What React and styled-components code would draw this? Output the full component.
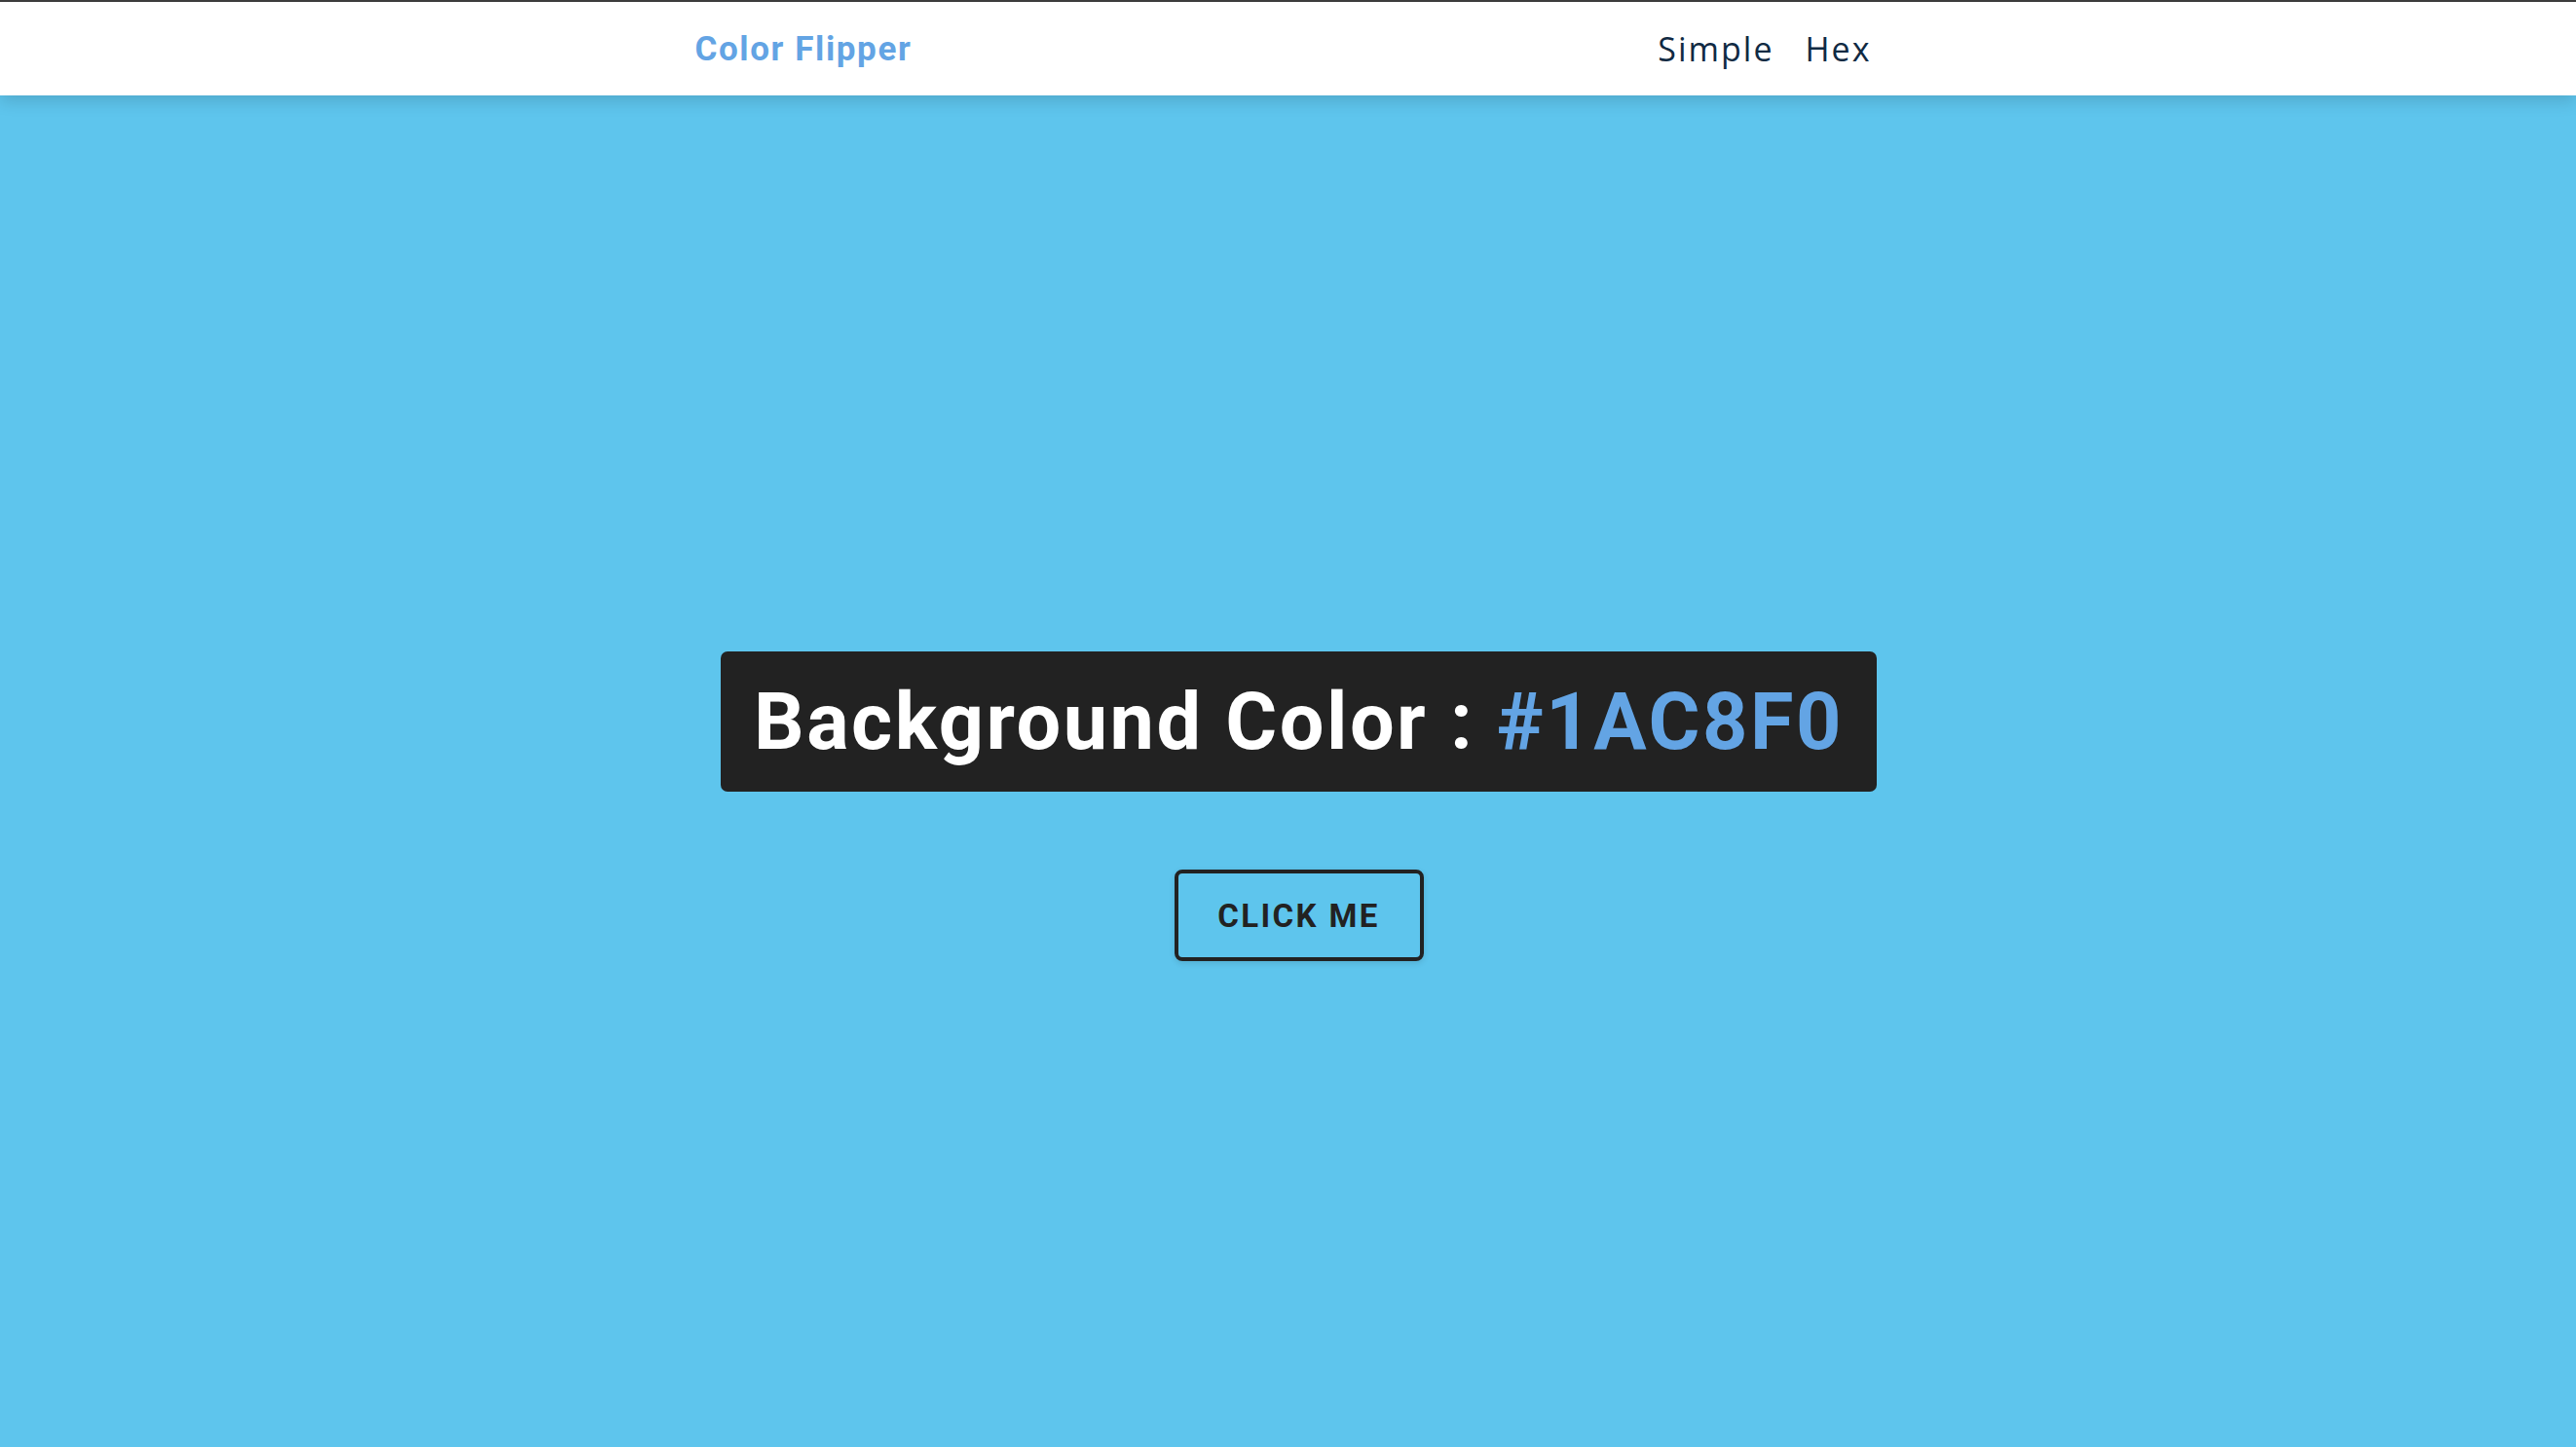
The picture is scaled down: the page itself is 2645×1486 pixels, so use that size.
import React from 'react';
import styled, { createGlobalStyle } from 'styled-components';

const GlobalStyle = createGlobalStyle`
  * {
    box-sizing: border-box;
  }
  html, body {
    margin: 0;
    padding: 0;
  }
  body {
    background-color: #5ec5ed;
    font-family: 'Open Sans', 'Liberation Sans', sans-serif;
    min-height: 100vh;
  }
`;

const Nav = styled.nav`
  height: 98px;
  background: #fff;
  border-top: 2px solid #3c3c3c;
  box-shadow: 0 6px 16px rgba(0, 0, 0, 0.14);
  display: flex;
  align-items: center;
`;

const NavCenter = styled.div`
  width: 1206px;
  margin: 0 auto;
  transform: translateX(-4px);
  display: flex;
  align-items: center;
  justify-content: space-between;
`;

const Logo = styled.h4`
  margin: 0 0 0 -2px;
  font-family: Roboto, 'Liberation Sans', sans-serif;
  font-weight: 700;
  font-size: 35px;
  letter-spacing: 1.6px;
  color: #63a4e4;
`;

const NavLinks = styled.ul`
  list-style: none;
  margin: 0;
  padding: 0;
  display: flex;
  gap: 32px;
`;

const NavLink = styled.li`
  font-size: 34px;
  letter-spacing: 2px;
  color: #102a43;
  line-height: 1;
`;

const Main = styled.main`
  display: flex;
  flex-direction: column;
  align-items: center;
  padding-top: 571px;
  padding-left: 22px;
`;

const Title = styled.h2`
  margin: 0;
  background: #222;
  color: #fff;
  border-radius: 7px;
  height: 144px;
  padding: 0 34px;
  display: flex;
  align-items: center;
  font-family: Roboto, 'Liberation Sans', sans-serif;
  font-weight: 700;
  font-size: 81px;
  letter-spacing: 2.5px;
  white-space: pre;
`;

const Hex = styled.span`
  color: #63a4e4;
`;

const Button = styled.button`
  margin-top: 80px;
  width: 256px;
  height: 94px;
  background: transparent;
  border: 4px solid #222;
  border-radius: 8px;
  font-family: Roboto, 'Liberation Sans', sans-serif;
  font-weight: 700;
  font-size: 33px;
  letter-spacing: 2.4px;
  text-transform: uppercase;
  color: #222;
  cursor: pointer;
  box-shadow: 0 2px 6px rgba(0, 0, 0, 0.12);
`;

const App = () => (
  <>
    <GlobalStyle />
    <Nav>
      <NavCenter>
        <Logo>Color Flipper</Logo>
        <NavLinks>
          <NavLink>Simple</NavLink>
          <NavLink>Hex</NavLink>
        </NavLinks>
      </NavCenter>
    </Nav>
    <Main>
      <Title>
        Background Color : <Hex>#1AC8F0</Hex>
      </Title>
      <Button>click me</Button>
    </Main>
  </>
);

export default App;
